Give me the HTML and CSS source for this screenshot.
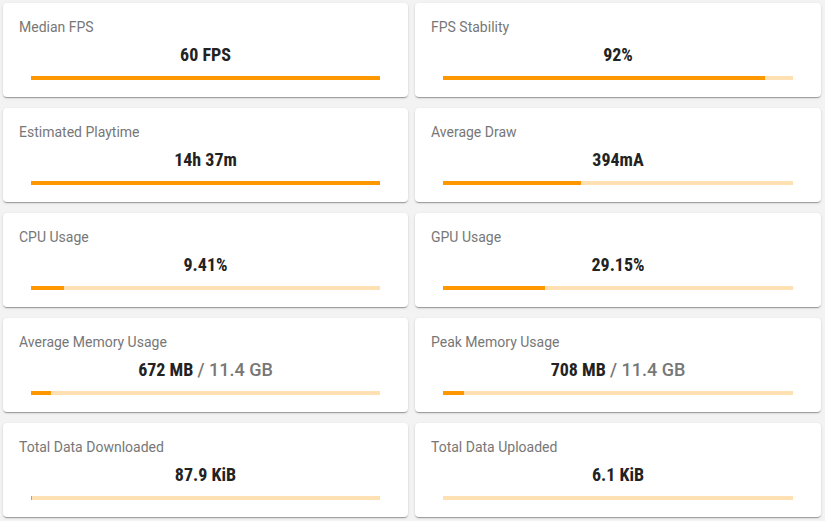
FILE: index.html
```html
<!DOCTYPE html>
<html>
<head>
<meta charset="utf-8">
<link rel="stylesheet" href="styles.css">
</head>
<body>
<div class="grid">
  <div class="card">
    <div class="title">Median FPS</div>
    <div class="value">60 FPS</div>
    <div class="bar"><div class="fill" style="width:100%"></div></div>
  </div>
  <div class="card">
    <div class="title">FPS Stability</div>
    <div class="value">92%</div>
    <div class="bar"><div class="fill" style="width:92%"></div></div>
  </div>
  <div class="card">
    <div class="title">Estimated Playtime</div>
    <div class="value">14h 37m</div>
    <div class="bar"><div class="fill" style="width:100%"></div></div>
  </div>
  <div class="card">
    <div class="title">Average Draw</div>
    <div class="value">394mA</div>
    <div class="bar"><div class="fill" style="width:39.4%"></div></div>
  </div>
  <div class="card">
    <div class="title">CPU Usage</div>
    <div class="value">9.41%</div>
    <div class="bar"><div class="fill" style="width:9.41%"></div></div>
  </div>
  <div class="card">
    <div class="title">GPU Usage</div>
    <div class="value">29.15%</div>
    <div class="bar"><div class="fill" style="width:29.15%"></div></div>
  </div>
  <div class="card">
    <div class="title">Average Memory Usage</div>
    <div class="value">672 MB <span class="total">/ 11.4 GB</span></div>
    <div class="bar"><div class="fill" style="width:5.76%"></div></div>
  </div>
  <div class="card">
    <div class="title">Peak Memory Usage</div>
    <div class="value">708 MB <span class="total">/ 11.4 GB</span></div>
    <div class="bar"><div class="fill" style="width:6.07%"></div></div>
  </div>
  <div class="card">
    <div class="title">Total Data Downloaded</div>
    <div class="value">87.9 KiB</div>
    <div class="bar"><div class="fill" style="width:0.3%"></div></div>
  </div>
  <div class="card">
    <div class="title">Total Data Uploaded</div>
    <div class="value">6.1 KiB</div>
    <div class="bar"><div class="fill" style="width:0%"></div></div>
  </div>
</div>
</body>
</html>
```

FILE: styles.css
```css
html, body {
  margin: 0;
  padding: 0;
  background: #f3f3f3;
  font-family: Roboto, "Liberation Sans", sans-serif;
}
.grid {
  display: grid;
  grid-template-columns: 405px 406px;
  column-gap: 7px;
  row-gap: 11px;
  padding: 3px 4px 3px 3px;
}
.card {
  background: #fff;
  border-radius: 4px;
  box-shadow: 0 2px 1px -1px rgba(0,0,0,0.2), 0 1px 1px 0 rgba(0,0,0,0.14), 0 1px 3px 0 rgba(0,0,0,0.12);
  height: 94px;
  box-sizing: border-box;
  padding: 14px 16px 0 16px;
}
.title {
  font-size: 14px;
  line-height: 20px;
  color: #777;
}
.value {
  margin-top: 6px;
  text-align: center;
  font-family: "Roboto Condensed", Roboto, sans-serif;
  font-stretch: condensed;
  font-weight: 700;
  font-size: 18px;
  line-height: 24px;
  color: #222;
}
.total {
  font-family: Roboto, sans-serif;
  font-stretch: normal;
  font-weight: 500;
  color: #777;
}
.bar {
  margin: 9px 12px 0 12px;
  height: 4px;
  background: #ffe0b2;
}
.fill {
  height: 100%;
  background: #ff9800;
}
```
